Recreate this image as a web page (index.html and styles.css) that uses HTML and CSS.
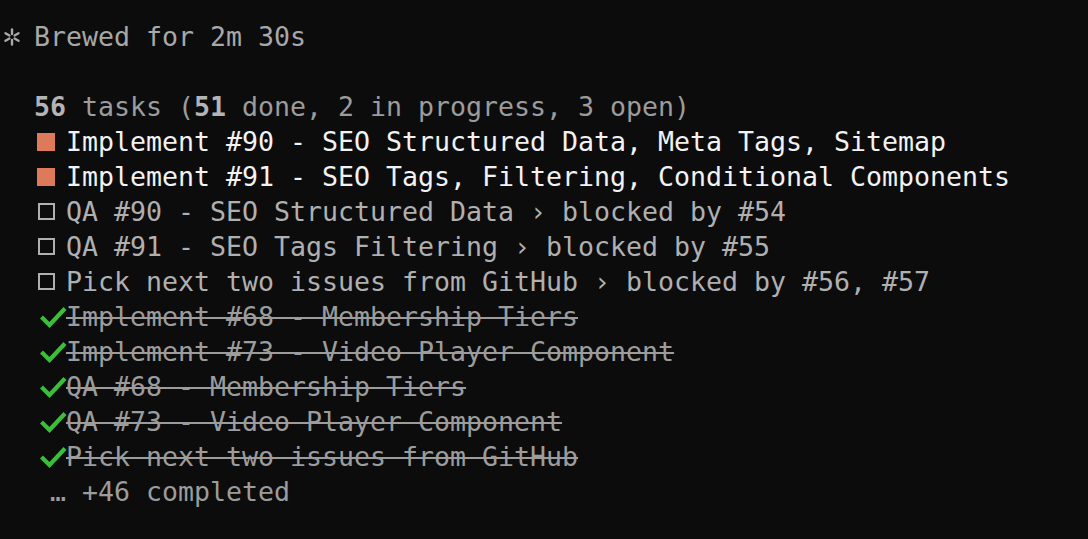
FILE: index.html
```html
<!DOCTYPE html>
<html>
<head>
<meta charset="utf-8">
<link rel="stylesheet" href="styles.css">
</head>
<body>
<div class="term">
  <div class="line status">
    <span class="cell2 spark"><svg width="18" height="18" viewBox="0 0 18 18"><g stroke="#a8a8a8" stroke-width="2.4" stroke-linecap="round"><line x1="9" y1="1.5" x2="9" y2="6"/><line x1="9" y1="12" x2="9" y2="16.5"/><line x1="2.5" y1="5.2" x2="6.4" y2="7.5"/><line x1="11.6" y1="10.5" x2="15.5" y2="12.8"/><line x1="2.5" y1="12.8" x2="6.4" y2="10.5"/><line x1="11.6" y1="7.5" x2="15.5" y2="5.2"/></g></svg></span><span class="txt">Brewed for 2m 30s</span>
  </div>
  <div class="line"></div>
  <div class="line summary indent"><span class="txt"><b>56</b> tasks (<b>51</b> done, 2 in progress, 3 open)</span></div>
  <div class="line task active indent"><span class="cell2"><span class="sq-fill"></span></span><span class="txt">Implement #90 - SEO Structured Data, Meta Tags, Sitemap</span></div>
  <div class="line task active indent"><span class="cell2"><span class="sq-fill"></span></span><span class="txt">Implement #91 - SEO Tags, Filtering, Conditional Components</span></div>
  <div class="line task open indent"><span class="cell2"><span class="sq-open"></span></span><span class="txt">QA #90 - SEO Structured Data › blocked by #54</span></div>
  <div class="line task open indent"><span class="cell2"><span class="sq-open"></span></span><span class="txt">QA #91 - SEO Tags Filtering › blocked by #55</span></div>
  <div class="line task open indent"><span class="cell2"><span class="sq-open"></span></span><span class="txt">Pick next two issues from GitHub › blocked by #56, #57</span></div>
  <div class="line task done indent"><span class="cell2"><svg class="check" width="28" height="22" viewBox="0 0 28 22"><path d="M2.5 11 L10.5 19 L26 2.5" fill="none" stroke="#3bbf3b" stroke-width="4.2"/></svg></span><span class="txt strike">Implement #68 - Membership Tiers</span></div>
  <div class="line task done indent"><span class="cell2"><svg class="check" width="28" height="22" viewBox="0 0 28 22"><path d="M2.5 11 L10.5 19 L26 2.5" fill="none" stroke="#3bbf3b" stroke-width="4.2"/></svg></span><span class="txt strike">Implement #73 - Video Player Component</span></div>
  <div class="line task done indent"><span class="cell2"><svg class="check" width="28" height="22" viewBox="0 0 28 22"><path d="M2.5 11 L10.5 19 L26 2.5" fill="none" stroke="#3bbf3b" stroke-width="4.2"/></svg></span><span class="txt strike">QA #68 - Membership Tiers</span></div>
  <div class="line task done indent"><span class="cell2"><svg class="check" width="28" height="22" viewBox="0 0 28 22"><path d="M2.5 11 L10.5 19 L26 2.5" fill="none" stroke="#3bbf3b" stroke-width="4.2"/></svg></span><span class="txt strike">QA #73 - Video Player Component</span></div>
  <div class="line task done indent"><span class="cell2"><svg class="check" width="28" height="22" viewBox="0 0 28 22"><path d="M2.5 11 L10.5 19 L26 2.5" fill="none" stroke="#3bbf3b" stroke-width="4.2"/></svg></span><span class="txt strike">Pick next two issues from GitHub</span></div>
  <div class="line more indent"><span class="cell1"></span><span class="cell2 txt">…</span><span class="txt">+46 completed</span></div>
</div>
</body>
</html>
```
FILE: styles.css
```css
html, body {
  margin: 0;
  padding: 0;
  background: #0c0c0c;
}
.term {
  padding: 19px 0 0 2px;
  font-family: "DejaVu Sans Mono", monospace;
  font-size: 26.58px;
  color: #a8a8a8;
}
.line {
  display: flex;
  align-items: center;
  height: 35px;
  line-height: 35px;
}
.txt {
  white-space: pre;
}
.indent {
  padding-left: 32px;
}
.cell1 {
  width: 16px;
  flex: none;
}
.cell2 {
  width: 32px;
  flex: none;
  display: flex;
  align-items: center;
}
.spark {
  padding-left: 1px;
  width: 31px;
}
.summary {
  color: #9c9c9c;
}
.summary b {
  color: #b4b4b4;
  font-weight: bold;
}
.active {
  color: #f2f2f2;
}
.open {
  color: #b0b0b0;
}
.done {
  color: #9c9c9c;
}
.more {
  color: #9c9c9c;
}
.sq-fill {
  display: block;
  width: 18px;
  height: 18px;
  margin-left: 3px;
  background: #dd7a5a;
}
.sq-open {
  display: block;
  width: 13px;
  height: 13px;
  margin-left: 4px;
  border: 2px solid #b0b0b0;
}
.check {
  display: block;
  margin-left: 5px;
  margin-right: -3px;
}
.strike {
  text-decoration: line-through;
  text-decoration-thickness: 2px;
  text-decoration-color: #9c9c9c;
}
```
